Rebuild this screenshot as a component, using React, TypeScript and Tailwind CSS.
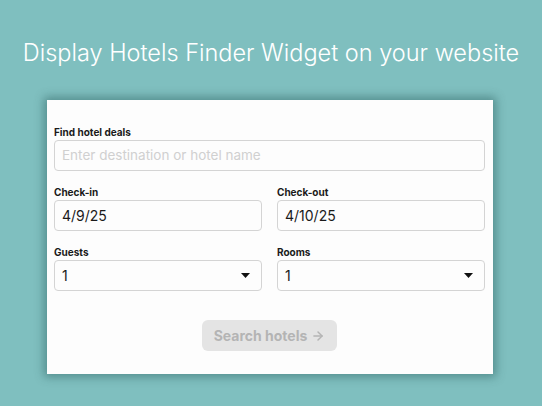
import { ArrowRight } from 'lucide-react';

const font = { fontFamily: 'Inter, "Noto Sans", sans-serif' };

function Label({ children }: { children: React.ReactNode }) {
  return <div className="text-[10px] leading-[12px] font-bold text-[#1a1a1a] mb-[2px]">{children}</div>;
}

function Caret() {
  return (
    <svg width="9" height="5" viewBox="0 0 9 5" className="shrink-0">
      <path d="M0 0 H9 L4.5 5 Z" fill="#111" />
    </svg>
  );
}

function Field({ value }: { value: string }) {
  return (
    <div className="h-[31px] border border-[#d4d4d4] rounded-[4px] flex items-center px-[7px] text-[14px] text-[#1a1a1a]">
      {value}
    </div>
  );
}

function Select({ value }: { value: string }) {
  return (
    <div className="h-[31px] border border-[#d4d4d4] rounded-[4px] flex items-center justify-between pl-[7px] pr-[11px] text-[14px] text-[#1a1a1a]">
      <span>{value}</span>
      <Caret />
    </div>
  );
}

export default function App() {
  return (
    <div className="w-[542px] h-[406px] bg-[#7fbfbf] flex flex-col" style={font}>
      <h1 className="mt-[38px] text-center text-[23.5px] leading-[30px] font-light text-white">
        Display Hotels Finder Widget on your website
      </h1>

      <div className="mt-[32px] ml-[47px] w-[446px] h-[274px] bg-[#fdfdfd] shadow-[0_0_9px_3px_rgba(30,80,80,0.45)] pl-[7px] pr-[8px] pt-[26px]">
        <Label>Find hotel deals</Label>
        <div className="h-[31px] border border-[#d4d4d4] rounded-[4px] flex items-center px-[7px] text-[13.5px] text-[#d0d0d0]">
          Enter destination or hotel name
        </div>

        <div className="grid grid-cols-2 gap-x-[15px] gap-y-[15px] mt-[15px]">
          <div>
            <Label>Check-in</Label>
            <Field value="4/9/25" />
          </div>
          <div>
            <Label>Check-out</Label>
            <Field value="4/10/25" />
          </div>
          <div>
            <Label>Guests</Label>
            <Select value="1" />
          </div>
          <div>
            <Label>Rooms</Label>
            <Select value="1" />
          </div>
        </div>

        <div className="flex justify-center mt-[29px]">
          <button className="w-[135px] h-[31px] rounded-[6px] bg-[#e4e4e4] text-[#b4b4b4] text-[14px] font-bold flex items-center justify-center gap-[4px]">
            Search hotels
            <ArrowRight size={14} strokeWidth={2.5} />
          </button>
        </div>
      </div>
    </div>
  );
}
